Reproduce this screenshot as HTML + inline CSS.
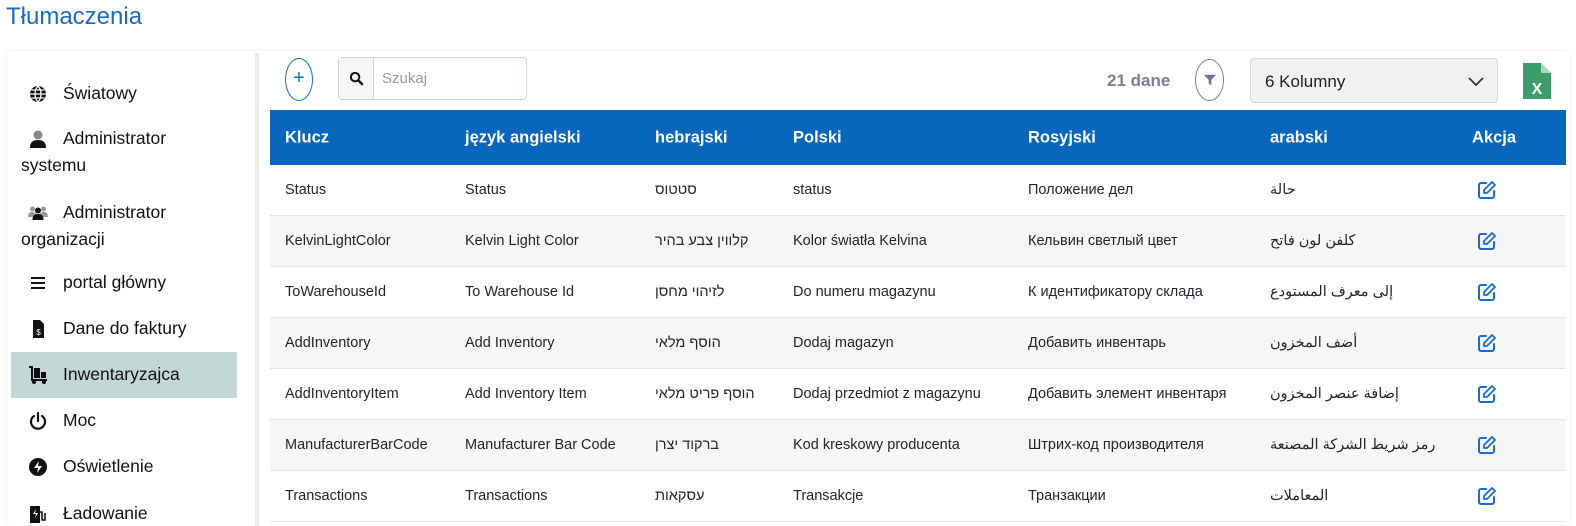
<!DOCTYPE html>
<html style="overflow:hidden;width:1576px;height:526px"><head><meta charset="utf-8"><style>
*{box-sizing:border-box;margin:0;padding:0}
body{width:1576px;height:526px;overflow:hidden;background:#fff;font-family:"Liberation Sans","Noto Sans CJK SC",sans-serif;color:#212529;position:relative}
.title{position:absolute;left:6px;top:3px;font-size:24px;color:#1a6bbd}
.card{position:absolute;left:7px;top:51px;width:1563px;height:475px;background:#fff;box-shadow:0 0 4px rgba(0,0,0,.08);border-radius:3px}
.side{position:absolute;left:0;top:0;width:248px;height:475px}
.div{position:absolute;left:248px;top:2px;width:4px;height:473px;background:#ececec}
.item{position:absolute;left:4px;width:226px;font-size:17.5px;color:#111;line-height:27px}
.item .ic{position:absolute;left:17px;top:4px;width:20px;height:20px}
.item .t{padding-left:52px;display:block}
.tbl{position:absolute;left:270px;top:110px;width:1296px}
.hd{height:55px;background:#0866bd;color:#fff;font-weight:bold;font-size:16.5px;position:relative}
.row{height:51px;position:relative;font-size:14.5px;border-bottom:1px solid #e3e3e3}
.c{position:absolute;top:50%;transform:translateY(-50%);white-space:nowrap}
.rtl{direction:rtl;unicode-bidi:isolate}
</style></head><body>
<div class="title">Tłumaczenia</div>
<div class="card">
 <div class="side">
  <div class="item" style="top:29px"><svg class="ic" viewBox="0 0 20 20"><circle cx="10" cy="10" r="8" fill="#111"/><path d="M2 10h16M10 2c-4 4-4 12 0 16M10 2c4 4 4 12 0 16M3.5 6h13M3.5 14h13" stroke="#fff" stroke-width="1.3" fill="none"/></svg><span class="t">Światowy</span></div>
  <div class="item" style="top:74px"><svg class="ic" viewBox="0 0 20 20"><circle cx="10" cy="6" r="4.5" fill="#888"/><path d="M2 19c0-6 3-8 8-8s8 2 8 8z" fill="#111"/></svg><span class="t">Administrator</span><span style="display:block;padding-left:10px">systemu</span></div>
  <div class="item" style="top:148px"><svg class="ic" viewBox="0 0 20 20"><circle cx="4.5" cy="6" r="2.5" fill="#999"/><circle cx="15.5" cy="6" r="2.5" fill="#999"/><path d="M0 14c0-4 2-5 4.5-5s4 1 4 5zM11.5 14c0-4 1.5-5 4-5s4.5 1 4.5 5z" fill="#999"/><circle cx="10" cy="7.5" r="3" fill="#111"/><path d="M4.5 17c0-5 2.5-6 5.5-6s5.5 1 5.5 6z" fill="#111"/></svg><span class="t">Administrator</span><span style="display:block;padding-left:10px">organizacji</span></div>
  <div class="item" style="top:218px"><svg class="ic" viewBox="0 0 20 20"><path d="M3 5h14M3 10h14M3 15h14" stroke="#111" stroke-width="2"/></svg><span class="t">portal główny</span></div>
  <div class="item" style="top:264px"><svg class="ic" viewBox="0 0 20 20"><path d="M5 1h7l4 4v14H5z" fill="#111"/><text x="10.5" y="16" font-size="8" fill="#fff" text-anchor="middle" font-family="Liberation Sans">$</text></svg><span class="t">Dane do faktury</span></div>
  <div class="item" style="top:301px;height:46px;background:#c2d7d6;padding-top:9px"><svg class="ic" viewBox="0 0 20 20" style="top:13px"><path d="M1 2h3v13h15" stroke="#111" stroke-width="2" fill="none"/><rect x="6" y="3" width="6" height="10" fill="#111"/><rect x="13" y="7" width="5" height="6" fill="#111"/><circle cx="6" cy="17" r="2" fill="#111"/><circle cx="16" cy="17" r="2" fill="#111"/></svg><span class="t">Inwentaryzajca</span></div>
  <div class="item" style="top:356px"><svg class="ic" viewBox="0 0 20 20"><path d="M10 2v8M6 5a7 7 0 1 0 8 0" stroke="#111" stroke-width="2.2" fill="none" stroke-linecap="round"/></svg><span class="t">Moc</span></div>
  <div class="item" style="top:402px"><svg class="ic" viewBox="0 0 20 20"><circle cx="10" cy="10" r="9" fill="#111"/><path d="M11 4l-5 7h4l-1 5 5-7h-4z" fill="#fff"/></svg><span class="t">Oświetlenie</span></div>
  <div class="item" style="top:449px"><svg class="ic" viewBox="0 0 20 20"><path d="M2 2h10v17H2z" fill="#111"/><path d="M8 5l-3 5h3l-1 4 3-5H7z" fill="#fff"/><path d="M12 8h2v8h3V9" stroke="#111" stroke-width="1.6" fill="none"/></svg><span class="t">Ładowanie</span></div>
 </div>
 <div class="div"></div>
 <div style="position:absolute;left:278px;top:7px;width:28px;height:43px;border:1px solid #1a6bbd;border-radius:50%;color:#1a6bbd;text-align:center;line-height:39px;font-size:20px">+</div>
 <div style="position:absolute;left:331px;top:6px;width:189px;height:43px;border:1px solid #ced4da;border-radius:4px;background:#fff"><div style="position:absolute;left:0;top:0;width:35px;height:41px;background:#f5f6f8;border-right:1px solid #ced4da"><svg viewBox="0 0 16 16" width="15" height="15" style="position:absolute;left:10px;top:13px"><circle cx="6.5" cy="6.5" r="4.5" stroke="#111" stroke-width="2.2" fill="none"/><path d="M10 10l4 4" stroke="#111" stroke-width="2.6" stroke-linecap="round"/></svg></div><span style="position:absolute;left:43px;top:12px;font-size:15px;color:#999">Szukaj</span></div>
 <div style="position:absolute;left:1100px;top:20px;font-size:17px;font-weight:bold;color:#7a8196">21 dane</div>
 <div style="position:absolute;left:1188px;top:8px;width:29px;height:42px;border:1px solid #7a8196;border-radius:50%"><svg viewBox="0 0 16 16" width="14" height="14" style="position:absolute;left:7px;top:13px"><path d="M1 2h14l-5.5 6v6l-3-2V8z" fill="#6f7a92"/></svg></div>
 <div style="position:absolute;left:1243px;top:7px;width:248px;height:45px;border:1px solid #d6d6d6;border-radius:4px;background:#f1f1f1"><span style="position:absolute;left:14px;top:13px;font-size:17px;color:#222">6 Kolumny</span><svg width="16" height="10" style="position:absolute;left:217px;top:18px"><path d="M1 1l7 7 7-7" stroke="#333" stroke-width="1.8" fill="none"/></svg></div>
 <svg viewBox="0 0 28 36" width="28" height="36" style="position:absolute;left:1516px;top:12px"><path d="M0 0h18l10 10v26H0z" fill="#3e9b6b"/><path d="M18 0l10 10h-10z" fill="#a8d7bd"/><text x="14" y="31" font-size="16" font-weight="bold" fill="#fff" text-anchor="middle" font-family="Liberation Sans">X</text></svg>
</div>
<div class="tbl">
 <div class="hd"><span class="c" style="left:15px">Klucz</span><span class="c" style="left:195px">język angielski</span><span class="c" style="left:385px">hebrajski</span><span class="c" style="left:523px">Polski</span><span class="c" style="left:758px">Rosyjski</span><span class="c" style="left:1000px">arabski</span><span class="c" style="left:1202px">Akcja</span></div>
 <div id="rows"></div>
</div>
<script>
const d=[["Status","Status","סטטוס","status","Положение дел","حالة"],
["KelvinLightColor","Kelvin Light Color","קלווין צבע בהיר","Kolor światła Kelvina","Кельвин светлый цвет","كلفن لون فاتح"],
["ToWarehouseId","To Warehouse Id","לזיהוי מחסן","Do numeru magazynu","К идентификатору склада","إلى معرف المستودع"],
["AddInventory","Add Inventory","הוסף מלאי","Dodaj magazyn","Добавить инвентарь","أضف المخزون"],
["AddInventoryItem","Add Inventory Item","הוסף פריט מלאי","Dodaj przedmiot z magazynu","Добавить элемент инвентаря","إضافة عنصر المخزون"],
["ManufacturerBarCode","Manufacturer Bar Code","ברקוד יצרן","Kod kreskowy producenta","Штрих-код производителя","رمز شريط الشركة المصنعة"],
["Transactions","Transactions","עסקאות","Transakcje","Транзакции","المعاملات"]];
const xs=[15,195,385,523,758,1000];let h='';
const ed='<svg class="c" style="left:1207px" width="20" height="20" viewBox="0 0 20 20"><path d="M9 3H4a2 2 0 0 0-2 2v11a2 2 0 0 0 2 2h11a2 2 0 0 0 2-2v-5" stroke="#1a6bd0" stroke-width="2" fill="none" stroke-linecap="round"/><path d="M15 2l3 3-8 8H7v-3z" stroke="#1a6bd0" stroke-width="1.8" fill="none" stroke-linejoin="round"/></svg>';
d.forEach((r,i)=>{h+='<div class="row" style="background:'+(i%2?'#f6f6f6':'#fff')+'">';r.forEach((t,j)=>{h+='<span class="c'+((j==2||j==5)?' rtl':'')+'" style="left:'+xs[j]+'px">'+t+'</span>'});h+=ed+'</div>'});
document.getElementById('rows').innerHTML=h;
</script>
</body></html>
